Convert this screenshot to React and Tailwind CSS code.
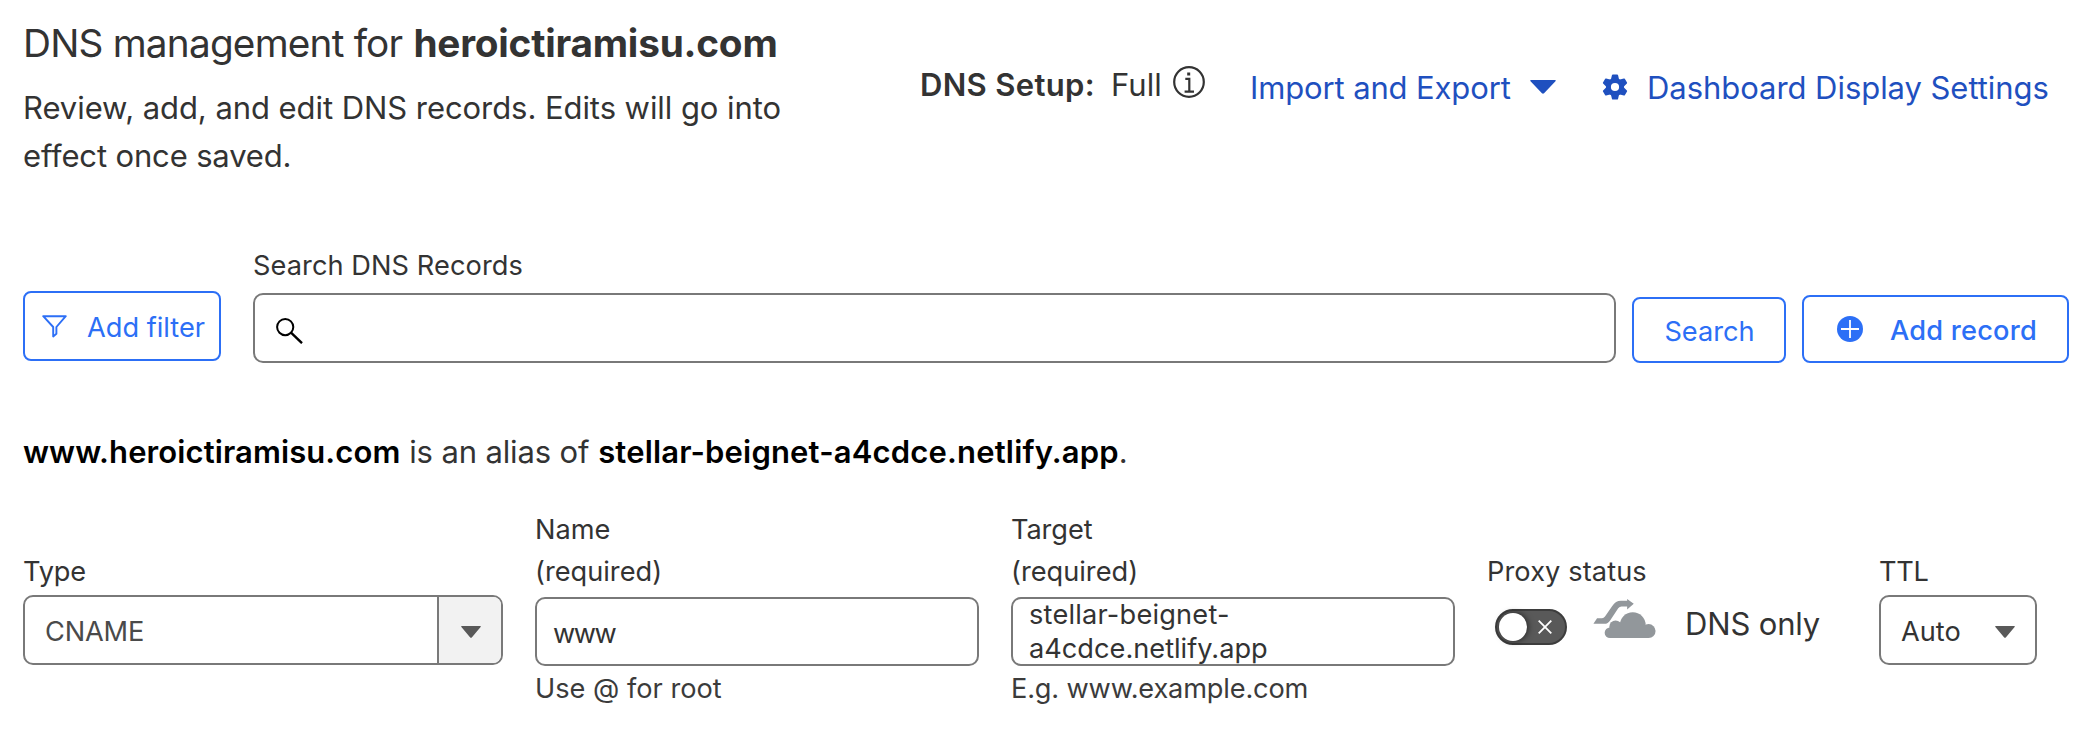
function Caret({ className }) {
  return (
    <svg viewBox="0 0 20 12" preserveAspectRatio="none" className={className} fill="currentColor">
      <path d="M0.8 0H19.2Q20.3 0.2 19.6 1L10.8 11.4Q10 12.2 9.2 11.4L0.4 1Q-0.3 0.2 0.8 0Z" />
    </svg>
  );
}

const toothAngles = [0, 60, 120, 180, 240, 300];

function GearIcon() {
  return (
    <svg viewBox="-13 -13 26 26" className="size-[26px]" fill="currentColor">
      <circle r="6.6" fill="none" stroke="currentColor" strokeWidth="5" />
      {toothAngles.map((angle) => (
        <path key={angle} transform={`rotate(${angle})`} d="M-4.2 -7L-3 -12Q-2.8 -12.6 -2.2 -12.6H2.2Q2.8 -12.6 3 -12L4.2 -7Z" />
      ))}
    </svg>
  );
}

function InfoIcon() {
  return (
    <svg viewBox="0 0 32 32" className="size-8" fill="none" stroke="currentColor" strokeWidth="2.2">
      <circle cx="16" cy="16" r="14.8" />
      <path d="M12.3 12.9H16.3V25.6M11.6 25.6H21" />
      <path d="M14.2 8H17.2" strokeWidth="3" />
    </svg>
  );
}

function FilterIcon() {
  return (
    <svg viewBox="0 0 25 23" className="h-[23px] w-[25px]" fill="none" stroke="currentColor" strokeWidth="1.9" strokeLinejoin="round">
      <path d="M1.2 1.2H23.8L14.4 12V18.8L11.2 21.4V12Z" />
    </svg>
  );
}

function SearchIcon() {
  return (
    <svg viewBox="0 0 27 26" className="h-[26px] w-[27px]" fill="none" stroke="currentColor" strokeWidth="2">
      <circle cx="9.2" cy="9.1" r="8.1" />
      <path d="M15 14.6L26 25.2" strokeWidth="2.4" />
    </svg>
  );
}

function PlusCircle() {
  return (
    <svg viewBox="0 0 26 26" className="size-[26px]">
      <circle cx="13" cy="13" r="13" fill="currentColor" />
      <path d="M13 4V22M4 13H22" stroke="white" strokeWidth="1.8" />
    </svg>
  );
}

function BypassCloud() {
  return (
    <svg viewBox="0 0 190 118" className="h-[39px] w-[63px]" fill="currentColor">
      <path d="M1 75L12 58H27Q32 58 36 53L58 21Q68 5 84 5H103V0L123 14L103 32V23H86Q80 23 76 28L52 64Q45 75 34 75Z" />
      <circle cx="68" cy="84" r="19" stroke="white" strokeWidth="4" />
      <circle cx="51" cy="102" r="16" />
      <circle cx="68" cy="84" r="19" />
      <circle cx="120" cy="79" r="39" />
      <circle cx="168" cy="97" r="21" />
      <rect x="51" y="84" width="117" height="34" />
    </svg>
  );
}

function Label({ children }) {
  return <label className="block leading-[42px] whitespace-nowrap">{children}</label>;
}

export default function App() {
  return (
    <main className="h-[734px] w-[2092px] overflow-hidden bg-white pl-[23px] font-['Inter',sans-serif] text-[27.2px] text-[#333333]">
      <header className="grid h-[181px] grid-cols-[897px_330px_352px_1fr] pt-[19px] text-[31px] leading-[48px] whitespace-nowrap">
        <div>
          <h1 className="text-[38.75px] tracking-[-0.8px]">
            DNS management for <b className="ml-px font-bold tracking-[-0.22px]">heroictiramisu.com</b>
          </h1>
          <p className="mt-[17px] tracking-[-0.06px]">
            Review, add, and edit DNS records. Edits will go into
            <br />
            <span className="tracking-[-0.15px]">effect once saved.</span>
          </p>
        </div>
        <div className="mt-[42px] flex h-12 items-center">
          <b className="font-semibold tracking-[0.35px]">DNS Setup:</b>
          <span className="ml-[16px]">Full</span>
          <span className="mb-[7px] ml-[11px]">
            <InfoIcon />
          </span>
        </div>
        <a className="mt-[45px] flex h-12 items-center text-[#1f50bf]">
          <span className="tracking-[-0.13px]">Import and Export</span>
          <Caret className="mb-[3px] ml-[19px] h-[14px] w-[26px]" />
        </a>
        <a className="mt-[45px] flex h-12 items-center text-[#1f50bf]">
          <span className="mb-[2px]">
            <GearIcon />
          </span>
          <span className="ml-[19px] tracking-[-0.05px]">Dashboard Display Settings</span>
        </a>
      </header>

      <section className="mt-[64px] flex h-[118px] items-end whitespace-nowrap">
        <button className="mb-[2px] flex h-[70px] w-[198px] items-center rounded-lg border-2 border-[#2c6ff6] pl-[17px] text-[#2c6ff6]">
          <FilterIcon />
          <span className="ml-5 pt-1 tracking-[0px]">Add filter</span>
        </button>
        <div className="ml-8">
          <label className="mb-[7px] block leading-10 tracking-[0.07px]">Search DNS Records</label>
          <div className="flex h-[70px] w-[1363px] items-center rounded-[10px] border-2 border-[#797979] pt-[5px] pl-[21px] text-black">
            <SearchIcon />
          </div>
        </div>
        <button className="ml-4 flex h-[66px] w-[154px] items-center justify-center rounded-lg border-2 border-[#2c6ff6] pt-1 pl-px text-[#2c6ff6]">
          Search
        </button>
        <button className="ml-4 flex h-[68px] w-[267px] items-center rounded-lg border-2 border-[#2c6ff6] pl-[33px] font-medium text-[#2c6ff6]">
          <PlusCircle />
          <span className="pt-1 pl-[27px] tracking-[0.22px]">Add record</span>
        </button>
      </section>

      <p className="mt-[65px] text-[31px] leading-[48px] whitespace-nowrap">
        <b className="font-semibold tracking-[0.1px] text-black">www.heroictiramisu.com</b>{' '}
        <span className="tracking-[-0.13px]">is an alias of</span>{' '}
        <b className="font-semibold tracking-[0.17px] text-black">stellar-beignet-a4cdce.netlify.app</b>.
      </p>

      <section className="mt-[33px] grid grid-cols-[480px_444px_444px_360px_158px] gap-8">
        <div className="pt-[42px]">
          <Label>
            <span className="tracking-[-0.2px]">Type</span>
          </Label>
          <div className="mt-[2px] flex h-[70px] overflow-hidden rounded-[10px] border-2 border-[#797979]">
            <span className="flex flex-1 items-center pt-1 pl-5 tracking-[-0.16px] text-[#4a4a4a]">CNAME</span>
            <span className="flex w-[64px] items-center justify-center border-l-2 border-[#797979] bg-[#f2f2f2] pl-[2px] text-[#595959]">
              <Caret className="mt-1 h-3 w-5" />
            </span>
          </div>
        </div>

        <div>
          <Label>
            Name
            <br />
            (required)
          </Label>
          <div className="mt-1 flex h-[69px] items-center rounded-[10px] border-2 border-[#797979] pt-[5px] pl-4 tracking-[-1.5px]">
            www
          </div>
          <p className="mt-[2px] leading-[42px] text-[#3b3b3b]">Use @ for root</p>
        </div>

        <div>
          <Label>
            <span className="tracking-[-0.1px]">Target</span>
            <br />
            (required)
          </Label>
          <div className="mt-1 flex h-[69px] flex-col rounded-[10px] border-2 border-[#797979] pl-[16px] leading-[34px]">
            <span className="-mt-px tracking-[0.2px]">stellar-beignet-</span>
            <span>a4cdce.netlify.app</span>
          </div>
          <p className="mt-[2px] leading-[42px] tracking-[-0.17px] text-[#3b3b3b]">E.g. www.example.com</p>
        </div>

        <div className="pt-[42px]">
          <Label>
            <span className="tracking-[0.1px]">Proxy status</span>
          </Label>
          <div className="mt-[6px] flex h-12 items-start pl-2 whitespace-nowrap">
            <span className="mt-[10px] flex h-9 w-[72px] items-center justify-between rounded-full border-2 border-[#3d3d3d] bg-[#595959] pr-[13px] pl-[2px]">
              <span className="size-7 rounded-full bg-white shadow-[1px_0_6px_rgba(0,0,0,0.6)]" />
              <svg viewBox="0 0 14 14" className="size-[14px]" stroke="white" strokeWidth="1.8">
                <path d="M0.7 0.7L13.3 13.3M13.3 0.7L0.7 13.3" />
              </svg>
            </span>
            <span className="ml-[26px] text-[#92979b]">
              <BypassCloud />
            </span>
            <span className="mt-px ml-[29px] text-[31px] leading-[48px] tracking-[-0.15px]">DNS only</span>
          </div>
        </div>

        <div className="pt-[42px]">
          <Label>
            <span className="tracking-[-0.3px]">TTL</span>
          </Label>
          <div className="mt-[2px] flex h-[70px] items-center justify-between rounded-[10px] border-2 border-[#797979] pt-1 pr-5 pl-5">
            <span>Auto</span>
            <Caret className="h-3 w-5 text-[#595959]" />
          </div>
        </div>
      </section>
    </main>
  );
}
